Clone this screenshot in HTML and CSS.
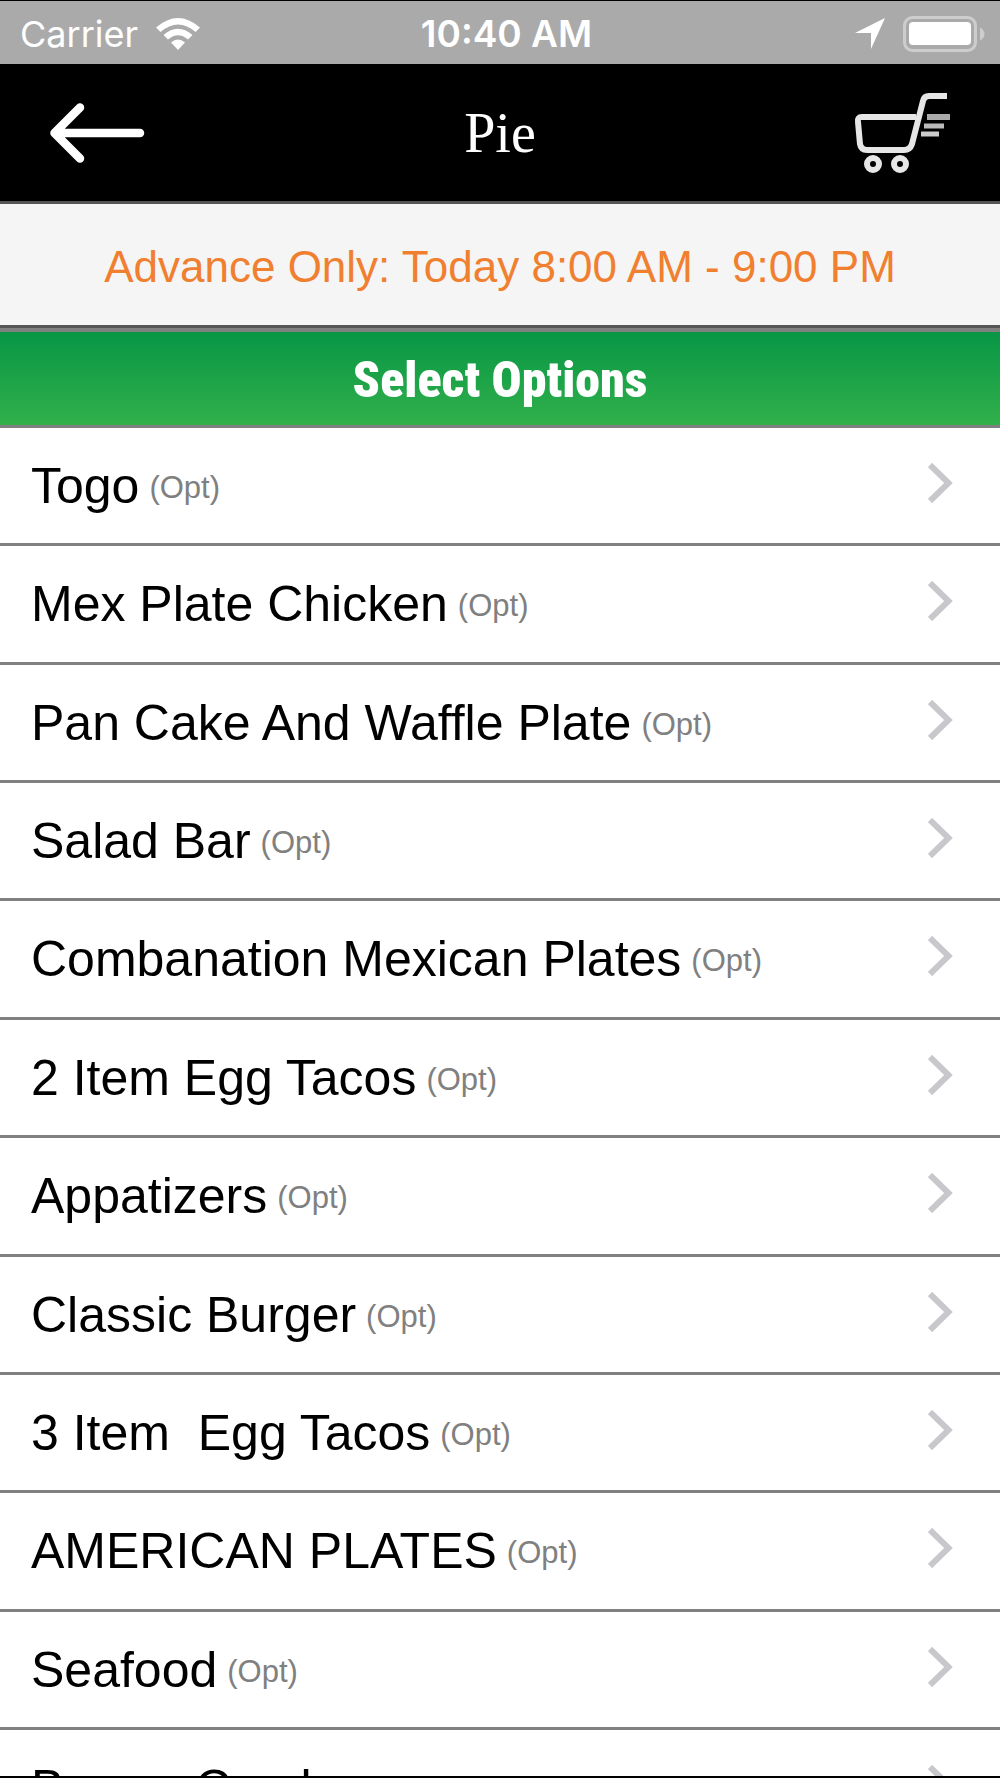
FILE: index.html
```html
<!DOCTYPE html>
<html lang="en">
<head>
<meta charset="utf-8">
<meta name="viewport" content="width=device-width, initial-scale=1">
<title>Pie</title>
<link rel="stylesheet" href="styles.css">
</head>
<body>
<div class="screen">
  <div class="status">
    <div class="status-left">
      <span>Carrier</span>
      <svg class="wifi" viewBox="0 0 44 32" aria-hidden="true"><path d="M0 9.500Q22-9.500 44 9.500L39.500 14Q22-1 4.500 14ZM7.500 17Q22 4.500 36.500 17L32 21.500Q22 13 12 21.500ZM15 24.500Q22 18.500 29 24.500L22 32Z" fill="#fff"/></svg>
    </div>
    <span class="clock">10:40 AM</span>
    <div class="status-right">
      <svg class="location" viewBox="0 0 30 31" aria-hidden="true"><path d="M30 0L16 31V15H0Z" fill="#fff"/></svg>
      <svg class="battery" viewBox="0 0 82 36" aria-hidden="true"><rect x="1.500" y="1.500" width="71" height="33" rx="8" fill="none" stroke="#cdcdcd" stroke-width="3"/><rect x="6" y="6" width="62" height="23" rx="4" fill="#fff"/><path d="M77 11.500Q81.500 14 81.500 18T77 24.500Z" fill="#cdcdcd"/></svg>
    </div>
  </div>
  <header class="nav">
    <button class="icon-button" type="button" aria-label="Back">
      <svg class="back" viewBox="0 0 96 60" aria-hidden="true"><path d="M5 30H90M30 4.500L4.500 30L30 55.500" fill="none" stroke="#fff" stroke-width="8.500" stroke-linecap="round" stroke-linejoin="round"/></svg>
    </button>
    <h1 class="title">Pie</h1>
    <button class="icon-button" type="button" aria-label="Cart">
      <svg class="cart" viewBox="0 0 96 82" aria-hidden="true"><g fill="none" stroke="#e6e6e6" stroke-width="6"><path d="M93 4H75Q70 4 69 9L58 52Q56 58 50 58H13Q7 58 6 52L4 30Q3 25 8 25H62"/><circle cx="19" cy="72" r="6"/><circle cx="46" cy="72" r="6"/></g><g stroke="#aaa" stroke-width="5"><path d="M73 25H96" stroke-width="6"/><path d="M70 34H90" stroke="#bbb"/><path d="M67 42H85" stroke="#ccc"/></g></svg>
    </button>
  </header>
  <p class="notice">Advance Only: Today 8:00 AM - 9:00 PM</p>
  <h2 class="section">Select Options</h2>
  <ul class="options">
    <li><a class="option" href="#"><span class="name">Togo</span><span class="opt">(Opt)</span><svg class="chevron" viewBox="0 0 25 40" aria-hidden="true"><path d="M2 2L20.500 20L2 38"/></svg></a></li>
    <li><a class="option" href="#"><span class="name">Mex Plate Chicken</span><span class="opt">(Opt)</span><svg class="chevron" viewBox="0 0 25 40" aria-hidden="true"><path d="M2 2L20.500 20L2 38"/></svg></a></li>
    <li><a class="option" href="#"><span class="name">Pan Cake And Waffle Plate</span><span class="opt">(Opt)</span><svg class="chevron" viewBox="0 0 25 40" aria-hidden="true"><path d="M2 2L20.500 20L2 38"/></svg></a></li>
    <li><a class="option" href="#"><span class="name">Salad Bar</span><span class="opt">(Opt)</span><svg class="chevron" viewBox="0 0 25 40" aria-hidden="true"><path d="M2 2L20.500 20L2 38"/></svg></a></li>
    <li><a class="option" href="#"><span class="name">Combanation Mexican Plates</span><span class="opt">(Opt)</span><svg class="chevron" viewBox="0 0 25 40" aria-hidden="true"><path d="M2 2L20.500 20L2 38"/></svg></a></li>
    <li><a class="option" href="#"><span class="name">2 Item Egg Tacos</span><span class="opt">(Opt)</span><svg class="chevron" viewBox="0 0 25 40" aria-hidden="true"><path d="M2 2L20.500 20L2 38"/></svg></a></li>
    <li><a class="option" href="#"><span class="name">Appatizers</span><span class="opt">(Opt)</span><svg class="chevron" viewBox="0 0 25 40" aria-hidden="true"><path d="M2 2L20.500 20L2 38"/></svg></a></li>
    <li><a class="option" href="#"><span class="name">Classic Burger</span><span class="opt">(Opt)</span><svg class="chevron" viewBox="0 0 25 40" aria-hidden="true"><path d="M2 2L20.500 20L2 38"/></svg></a></li>
    <li><a class="option" href="#"><span class="name">3 Item  Egg Tacos</span><span class="opt">(Opt)</span><svg class="chevron" viewBox="0 0 25 40" aria-hidden="true"><path d="M2 2L20.500 20L2 38"/></svg></a></li>
    <li><a class="option" href="#"><span class="name">AMERICAN PLATES</span><span class="opt">(Opt)</span><svg class="chevron" viewBox="0 0 25 40" aria-hidden="true"><path d="M2 2L20.500 20L2 38"/></svg></a></li>
    <li><a class="option" href="#"><span class="name">Seafood</span><span class="opt">(Opt)</span><svg class="chevron" viewBox="0 0 25 40" aria-hidden="true"><path d="M2 2L20.500 20L2 38"/></svg></a></li>
    <li><a class="option" href="#"><span class="name">Burger Comb</span><svg class="chevron" viewBox="0 0 25 40" aria-hidden="true"><path d="M2 2L20.500 20L2 38"/></svg></a></li>
  </ul>
</div>
</body>
</html>
```
FILE: styles.css
```css
* { box-sizing: border-box; }
body {
  margin: 0;
  background: #fff;
  font-family: "Liberation Sans", Arial, sans-serif;
}
.screen {
  display: flex;
  flex-direction: column;
  height: 100vh;
  overflow: hidden;
  border-top: 1px solid #000;
  border-bottom: 2px solid #000;
}
.status {
  flex: none;
  display: grid;
  grid-template-columns: 1fr auto 1fr;
  align-items: center;
  height: 63px;
  padding: 2px 15px 0 20px;
  background: #aaa;
  color: #fff;
  font: 36px/44px Inter, sans-serif;
}
.status-left, .status-right {
  display: flex;
  align-items: center;
}
.status-left { gap: 18px; }
.status-right {
  justify-content: flex-end;
  gap: 18px;
}
.clock {
  padding-left: 8px;
  font-size: 37px;
  font-weight: 600;
}
.wifi { width: 44px; height: 32px; }
.location { width: 30px; height: 31px; }
.battery { width: 82px; height: 36px; }
.nav {
  flex: none;
  display: flex;
  align-items: center;
  justify-content: space-between;
  height: 140px;
  padding: 0 50px;
  background: #000;
  border-bottom: 3px solid #555;
  color: #fff;
}
.title {
  margin: 0;
  font: 56px/64px "Liberation Serif", "Times New Roman", serif;
}
.icon-button {
  padding: 0;
  border: 0;
  background: none;
}
.icon-button svg { display: block; }
.back { width: 96px; height: 60px; }
.cart { width: 96px; height: 82px; }
.notice {
  flex: none;
  margin: 0;
  padding: 38px 20px 33px;
  background: #f5f5f5;
  border-bottom: 3px solid #555;
  color: #f08030;
  font-size: 44px;
  line-height: 50px;
  text-align: center;
}
.section {
  flex: none;
  margin: 0;
  padding: 19px 20px 16px;
  background: linear-gradient(#089645, #31b04b) padding-box;
  border-top: 4px solid #808080;
  border-bottom: 3px solid #808080;
  color: #fff;
  font: 900 50px/58px "Roboto Condensed", "Roboto", sans-serif;
  font-stretch: condensed;
  text-align: center;
}
.options {
  flex: 1;
  display: grid;
  grid-template-rows: repeat(11, 1fr) 46px;
  margin: 0;
  padding: 0;
  list-style: none;
}
.option {
  display: flex;
  align-items: flex-start;
  height: 100%;
  padding: 29px 47px 0 31px;
  border-bottom: 3px solid #808080;
  color: #000;
  font-size: 50px;
  line-height: 58px;
  text-decoration: none;
  white-space: pre;
}
.options li:last-child .option { border: 0; }
.opt {
  margin-left: 10px;
  padding-top: 2px;
  color: #808080;
  font-size: 31px;
}
.chevron {
  width: 25px;
  height: 40px;
  margin: 6px 0 0 auto;
  fill: none;
  stroke: #c7c7cc;
  stroke-width: 6;
}
```
